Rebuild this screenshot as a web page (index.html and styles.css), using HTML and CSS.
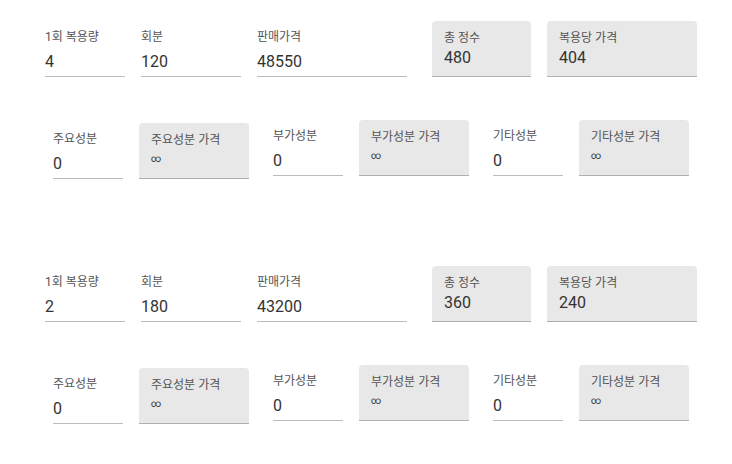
FILE: index.html
```html
<!DOCTYPE html>
<html lang="ko">
<head>
  <meta charset="UTF-8">
  <meta name="viewport" content="width=device-width">
  <title>복용량 계산</title>
  <link rel="stylesheet" href="styles.css">
</head>
<body>

<section class=calc>
  <div class=main>
    <label class="field w80"><span class=lbl>1회 복용량</span><span class=val>4</span></label>
    <label class="field w100"><span class=lbl>회분</span><span class=val>120</span></label>
    <label class="field w150"><span class=lbl>판매가격</span><span class=val>48550</span></label>
    <div class="box w99 gap"><span class=lbl>총 정수</span><span class=val>480</span></div>
    <div class="box w150"><span class=lbl>복용당 가격</span><span class=val>404</span></div>
  </div>
  <div class=sub>
    <div class="pair low">
      <label class="field w70"><span class=lbl>주요성분</span><span class=val>0</span></label>
      <div class="box w110"><span class=lbl>주요성분 가격</span><span class="val inf">∞</span></div>
    </div>
    <div class=pair>
      <label class="field w70"><span class=lbl>부가성분</span><span class=val>0</span></label>
      <div class="box w110"><span class=lbl>부가성분 가격</span><span class="val inf">∞</span></div>
    </div>
    <div class=pair>
      <label class="field w70"><span class=lbl>기타성분</span><span class=val>0</span></label>
      <div class="box w110"><span class=lbl>기타성분 가격</span><span class="val inf">∞</span></div>
    </div>
  </div>
</section>

<section class=calc>
  <div class=main>
    <label class="field w80"><span class=lbl>1회 복용량</span><span class=val>2</span></label>
    <label class="field w100"><span class=lbl>회분</span><span class=val>180</span></label>
    <label class="field w150"><span class=lbl>판매가격</span><span class=val>43200</span></label>
    <div class="box w99 gap"><span class=lbl>총 정수</span><span class=val>360</span></div>
    <div class="box w150"><span class=lbl>복용당 가격</span><span class=val>240</span></div>
  </div>
  <div class=sub>
    <div class="pair low">
      <label class="field w70"><span class=lbl>주요성분</span><span class=val>0</span></label>
      <div class="box w110"><span class=lbl>주요성분 가격</span><span class="val inf">∞</span></div>
    </div>
    <div class=pair>
      <label class="field w70"><span class=lbl>부가성분</span><span class=val>0</span></label>
      <div class="box w110"><span class=lbl>부가성분 가격</span><span class="val inf">∞</span></div>
    </div>
    <div class=pair>
      <label class="field w70"><span class=lbl>기타성분</span><span class=val>0</span></label>
      <div class="box w110"><span class=lbl>기타성분 가격</span><span class="val inf">∞</span></div>
    </div>
  </div>
</section>

</body>
</html>
```

FILE: styles.css
```css
body {
  margin: 0;
  font-family: Roboto, "Noto Sans CJK KR", sans-serif;
  color: #333;
  background: white;
}
.calc {
  height: 245px;
  padding-top: 21px;
  box-sizing: border-box;
}
.calc:last-child { height: auto; }
.main {
  display: flex;
  align-items: flex-end;
  gap: 16px;
  padding-left: 45px;
}
.sub {
  display: flex;
  align-items: flex-start;
  gap: 24px;
  margin-top: 43px;
  padding-left: 53px;
}
.pair {
  display: flex;
  align-items: flex-end;
  gap: 16px;
}
.low { margin-top: 3px; }
.gap { margin-left: 9px; }

.field, .box {
  display: flex;
  flex-direction: column;
  box-sizing: border-box;
}
.field { border-bottom: 1px solid #bdbdbd; padding-bottom: 5px; }
.field .val { margin-top: 8px; }
.box {
  background: #e8e8e8;
  border-bottom: 1px solid #b0b0b0;
  border-radius: 4px 4px 0 0;
  padding: 10px 12px 9px;
}
.box .val { margin-top: 3px; }
.box .inf {
  font-size: 10px;
  line-height: 13px;
  margin: 5px 0 4px;
}

.lbl {
  font-size: 12px;
  line-height: 14px;
  color: #555;
  white-space: nowrap;
}
.val {
  font-size: 16px;
  line-height: 19px;
  color: #333;
}

.w70 { width: 70px; }
.w80 { width: 80px; }
.w99 { width: 99px; }
.w100 { width: 100px; }
.w110 { width: 110px; }
.w150 { width: 150px; }
```
